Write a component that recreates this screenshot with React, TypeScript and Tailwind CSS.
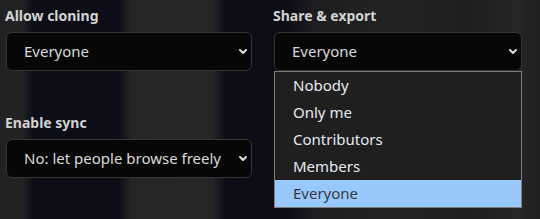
import React from "react";

const SHARE_OPTIONS = ["Nobody", "Only me", "Contributors", "Members", "Everyone"];

function Chevron() {
  return (
    <svg width="8" height="5" viewBox="0 0 8 5" className="shrink-0">
      <path d="M1 1L4 4L7 1" fill="none" stroke="#dcdcdc" strokeWidth="2" strokeLinecap="round" strokeLinejoin="round" />
    </svg>
  );
}

function Select({ value, open = false }: { value: string; open?: boolean }) {
  return (
    <div className="relative">
      <div className="flex h-[39px] items-center justify-between rounded-[6px] border border-[#343434] bg-[#070707] pl-[17px] pr-[4px] text-[15px] text-[#d9d9d9]">
        <span>{value}</span>
        <Chevron />
      </div>
      {open && (
        <ul className="absolute left-0 right-0 top-[39px] z-10 border border-[#7e7e7e] bg-[#1f1f1f]">
          {SHARE_OPTIONS.map((opt) => (
            <li
              key={opt}
              className={`flex h-[27px] items-center pl-[18px] text-[15px] ${
                opt === value ? "bg-[#99c8ff] text-[#3a3a3a]" : "text-[#e8e9f0]"
              }`}
            >
              {opt}
            </li>
          ))}
        </ul>
      )}
    </div>
  );
}

function Field({ label, value, open }: { label: string; value: string; open?: boolean }) {
  return (
    <div className="flex flex-col">
      <label className="-ml-px text-[14px] font-bold leading-[19px] text-[#d2d2d2]">{label}</label>
      <div className="mt-[7px]">
        <Select value={value} open={open} />
      </div>
    </div>
  );
}

export default function App() {
  return (
    <div className="h-[219px] w-[540px] overflow-hidden bg-[linear-gradient(90deg,#222_0px,#232323_22px,#0c0d17_34px,#0c0d17_118px,#252525_132px,#262626_212px,#0c0d17_226px,#0c0d17_290px,#1d1d1f_312px,#232323_400px,#1e1e1e_470px,#262626_515px,#1f1f22_540px)] pl-[6px] pt-[6px] font-['Noto_Sans',sans-serif]">
      <div className="grid grid-cols-[246px_248px] gap-x-[22px] gap-y-[42px]">
        <Field label="Allow cloning" value="Everyone" />
        <Field label="Share & export" value="Everyone" open />
        <Field label="Enable sync" value="No: let people browse freely" />
      </div>
    </div>
  );
}
